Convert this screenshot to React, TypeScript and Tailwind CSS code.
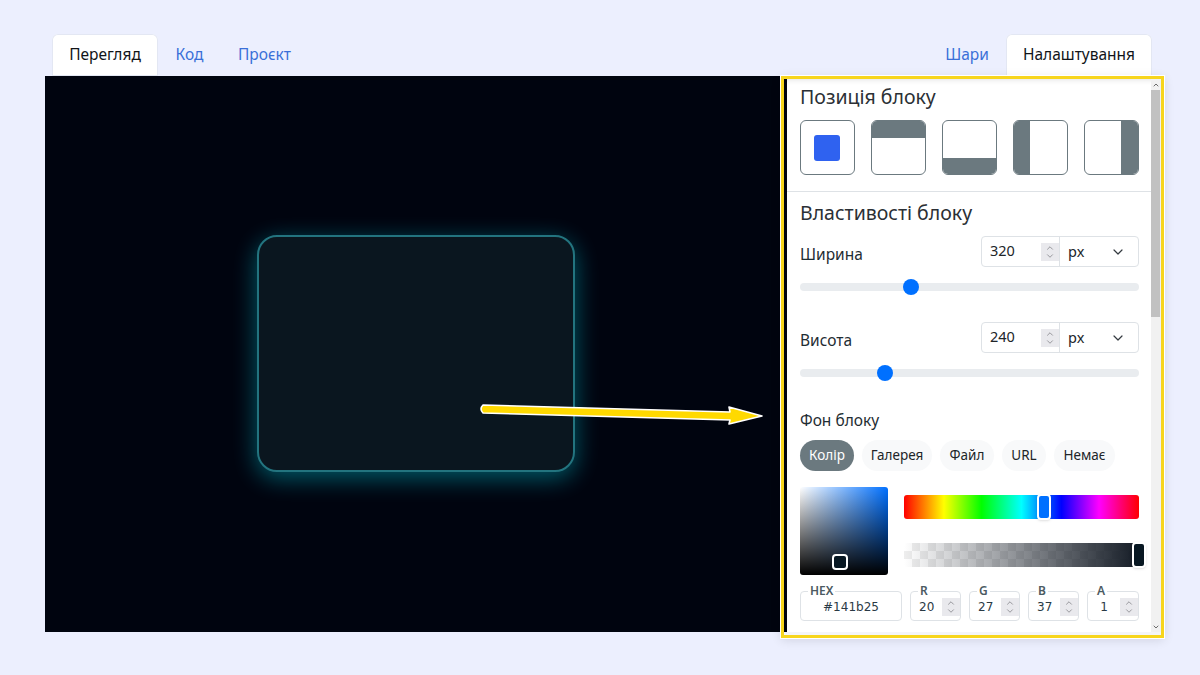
import { ChevronDown, ChevronUp } from 'lucide-react';

const FONT = 'font-["Noto_Sans","Open_Sans",sans-serif]';

const POSITIONS = [
  { key: 'center', bar: '' },
  { key: 'top', bar: 'top-0 inset-x-0 h-[17px]' },
  { key: 'bottom', bar: 'bottom-0 inset-x-0 h-[16px]' },
  { key: 'left', bar: 'left-0 inset-y-0 w-[16px]' },
  { key: 'right', bar: 'right-0 inset-y-0 w-[17px]' },
];

const BG_TABS = [
  { label: 'Колір', width: 'w-[54px]', active: true },
  { label: 'Галерея', width: 'w-[70px]' },
  { label: 'Файл', width: 'w-[54px]' },
  { label: 'URL', width: 'w-[44px]' },
  { label: 'Немає', width: 'w-[61px]' },
];

const CHANNELS = [
  { label: 'R', value: '20', width: 'w-[51px]' },
  { label: 'G', value: '27', width: 'w-[51px]' },
  { label: 'B', value: '37', width: 'w-[51px]' },
  { label: 'A', value: '1', width: 'w-[52px]' },
];

function Spinner() {
  return (
    <span className="flex h-[18px] w-[18px] flex-col items-center justify-center bg-[#e9e9ed] text-[#6f6f75]">
      <ChevronUp size={12} strokeWidth={1.6} className="-mb-[1px]" />
      <ChevronDown size={12} strokeWidth={1.6} className="-mt-[1px]" />
    </span>
  );
}

function SizeRow({ label, value, thumb, gap }: { label: string; value: string; thumb: string; gap: string }) {
  return (
    <div className={gap}>
      <div className="flex items-center justify-between pr-[12px]">
        <span className="pt-[6px] text-[15.5px] text-[#1f2d33]">{label}</span>
        <div className="flex h-[31px] w-[158px] items-center rounded-[4px] border border-[#dee2e6] text-[14.5px] text-[#212529]">
          <div className="flex h-full w-[78px] items-center justify-between border-r border-[#dee2e6] pl-[8px]">
            <span className="-mt-[1px]">{value}</span>
            <Spinner />
          </div>
          <div className="flex flex-1 items-center justify-between pl-[8px] pr-[12px]">
            <span>px</span>
            <ChevronDown size={16} strokeWidth={1.8} className="text-[#343a40]" />
          </div>
        </div>
      </div>
      <div className="relative mt-[16px] mr-[12px] h-[8px] rounded-full bg-[#e9ecef]">
        <span className={`absolute top-[-4px] h-[16px] w-[16px] rounded-full bg-[#0070ff] ${thumb}`} />
      </div>
    </div>
  );
}

function LegendField({ label, width, labelPad, children }: { label: string; width: string; labelPad: string; children: React.ReactNode }) {
  return (
    <div className={`relative h-[30px] rounded-[4px] border border-[#dee2e6] ${width}`}>
      <span className={`absolute top-[-8px] bg-white px-[2px] text-[12px] leading-[14px] font-semibold text-[#4b5a62] ${labelPad}`}>{label}</span>
      {children}
    </div>
  );
}

function Panel() {
  return (
    <aside className="flex h-[562px] w-[383px] shrink-0 border-[3px] border-[#f7d51d] bg-[#f4f5f8] shadow-[0_0_0_1px_#ffffff,0_2px_10px_rgba(0,0,0,0.12)]">
      <div className="flex h-[553px] w-full">
        <div className="w-[3px] shrink-0 bg-[#00040f]" />
        <div className={`h-full w-[364px] shrink-0 overflow-hidden bg-white shadow-[inset_0_6px_6px_-6px_rgba(0,0,0,0.15)] ${FONT}`}>
          <h3 className="mt-[4px] pl-[13px] text-[19.5px] leading-[28px] text-[#2b3035]">Позиція блоку</h3>
          <div className="mt-[9px] flex gap-[16px] pl-[13px]">
            {POSITIONS.map(({ key, bar }) => (
              <div key={key} className="relative flex h-[55px] w-[55px] items-center justify-center overflow-hidden rounded-[6px] border border-[#6b797f] bg-white">
                {bar ? <span className={`absolute bg-[#6b797f] ${bar}`} /> : <span className="mr-[2px] h-[26px] w-[26px] rounded-[3px] bg-[#2f62f0]" />}
              </div>
            ))}
          </div>
          <div className="mt-[16px] h-px bg-[#dee2e6]" />
          <div className="pl-[13px]">
            <h3 className="mt-[7px] text-[19.5px] leading-[28px] text-[#2b3035]">Властивості блоку</h3>
            <SizeRow label="Ширина" value="320" thumb="left-[103px]" gap="mt-[9px]" />
            <SizeRow label="Висота" value="240" thumb="left-[77px]" gap="mt-[31px]" />
            <p className="mt-[33px] text-[15.5px] leading-[20px] text-[#1f2d33]">Фон блоку</p>
            <div className="mt-[10px] flex gap-[8px]">
              {BG_TABS.map(({ label, width, active }) => (
                <span
                  key={label}
                  className={[
                    'flex h-[31px] items-center justify-center rounded-full text-[13.5px]',
                    width,
                    active ? 'bg-[#6b797f] text-white' : 'bg-[#f8f9fa] text-[#212529]',
                  ].join(' ')}
                >
                  {label}
                </span>
              ))}
            </div>
            <div className="mt-[16px] flex gap-[16px]">
              <div className="relative h-[88px] w-[88px] rounded-[3px] bg-[#0070ff] bg-[linear-gradient(to_top,#000,transparent),linear-gradient(to_right,#fff,transparent)]">
                <span className="absolute left-[32px] top-[67px] h-[16px] w-[16px] rounded-[4px] border-2 border-white bg-[#081722]" />
              </div>
              <div className="w-[235px] pt-[8px]">
                <div className="relative h-[24px] rounded-[3px] bg-[linear-gradient(to_right,#f00,#ff0_17%,#0f0_33%,#0ff_50%,#00f_67%,#f0f_83%,#f00)]">
                  <span className="absolute left-[133px] top-[-1px] h-[26px] w-[14px] rounded-[4px] border-2 border-white bg-[#0070ff] shadow-sm" />
                </div>
                <div className="relative mt-[24px] h-[24px] rounded-[3px] bg-[repeating-conic-gradient(#eeeeee_0_25%,#ffffff_0_50%)] bg-[length:16px_16px]">
                  <div className="h-full rounded-[3px] bg-[linear-gradient(to_right,rgba(20,27,37,0),#141b25)]" />
                  <span className="absolute left-[228px] top-[-1px] h-[26px] w-[14px] rounded-[4px] border-2 border-white bg-[#081722] shadow-sm" />
                </div>
              </div>
            </div>
            <div className="mt-[16px] flex gap-[8px] text-[#2a3a45]">
              <LegendField label="HEX" width="w-[102px]" labelPad="left-[7px]">
                <span className="flex h-full items-center justify-center pt-[1px] font-['DejaVu_Sans',sans-serif] text-[12px]">#141b25</span>
              </LegendField>
              {CHANNELS.map(({ label, value, width }) => (
                <LegendField key={label} label={label} width={width} labelPad="left-[7px]">
                  <span className="flex h-full items-center justify-between pt-[1px]">
                    <span className="w-[32px] text-center font-['DejaVu_Sans',sans-serif] text-[12px]">{value}</span>
                    <Spinner />
                  </span>
                </LegendField>
              ))}
            </div>
          </div>
        </div>
        <div className="relative w-[10px] shrink-0 bg-[#f1f1f1] text-[#505050]">
          <div className="mx-auto flex h-[11px] w-[9px] items-center justify-center">
            <ChevronUp size={8} strokeWidth={2.5} />
          </div>
          <div className="ml-0 h-[227px] w-[9px] bg-[#c1c1c1]" />
          <div className="absolute bottom-0 left-0 flex h-[11px] w-[9px] items-center justify-center">
            <ChevronDown size={8} strokeWidth={2.5} />
          </div>
        </div>
      </div>
    </aside>
  );
}

function Tab({ label, active, width }: { label: string; active?: boolean; width: string }) {
  return (
    <span
      className={[
        'flex h-[42px] items-center justify-center rounded-t-[6px] pb-[1px] text-[15.5px]',
        width,
        active ? 'bg-white text-[#111418] shadow-[inset_0_0_0_1px_#e3e7f3]' : 'text-[#3a6fd8]',
      ].join(' ')}
    >
      {label}
    </span>
  );
}

export default function App() {
  return (
    <div className={`relative h-[675px] w-[1200px] overflow-hidden bg-[#eceffe] ${FONT}`}>
      <div className="flex h-[76px] items-end justify-between pl-[52px] pr-[48px]">
        <div className="flex">
          <Tab label="Перегляд" active width="w-[106px]" />
          <Tab label="Код" width="w-[63px]" />
          <Tab label="Проєкт" width="w-[87px]" />
        </div>
        <div className="flex">
          <Tab label="Шари" width="w-[78px]" />
          <Tab label="Налаштування" active width="w-[146px]" />
        </div>
      </div>
      <div className="flex items-start pl-[45px]">
        <div className="flex h-[556px] w-[736px] shrink-0 items-start justify-start bg-[#00040f] pl-[212px] pt-[159px]">
          <div className="h-[237px] w-[318px] rounded-[20px] border-2 border-[#23747f] bg-[#0a161f] shadow-[0_6px_24px_rgba(0,200,220,0.45)]" />
        </div>
        <Panel />
      </div>
      <svg className="absolute left-[470px] top-[395px]" width="300" height="35" viewBox="0 0 300 35">
        <path
          d="M13 10 L260 17 L259 12 L292 21 L259 29 L260 25 L13 18 Q9 14 13 10 Z"
          fill="#ffd900"
          stroke="#ffffff"
          strokeWidth="1.6"
          strokeLinejoin="round"
        />
      </svg>
    </div>
  );
}
